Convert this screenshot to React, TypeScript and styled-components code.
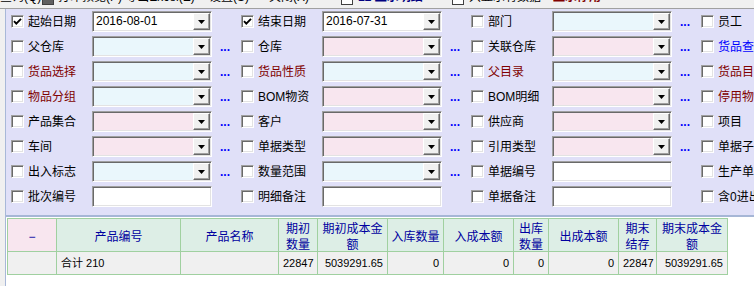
import React from 'react';
import styled, { createGlobalStyle } from 'styled-components';

const GlobalStyle = createGlobalStyle`
  html, body { margin: 0; padding: 0; }
  body {
    background: #f0f0f0;
    font-family: "Liberation Sans", "Noto Sans CJK SC", sans-serif;
    font-size: 12px;
    color: #000;
    width: 754px;
    height: 286px;
    overflow: hidden;
  }
  #root { width: 754px; height: 286px; }
`;

const CYAN = '#eaf7fc';
const PINK = '#f8e6ef';
const WHITE = '#ffffff';
const RED = '#800000';
const BLUE = '#0000ff';
const GRID = '#a0d0a0';

const Page = styled.div`
  width: 754px;
  height: 286px;
  display: flex;
  flex-direction: column;
  overflow: hidden;
`;

const ToolStrip = styled.div`
  flex: none;
  height: 8px;
  display: flex;
  align-items: flex-end;
  overflow: hidden;
  border-bottom: 1px solid #a0a0a0;
`;

const ToolItem = styled.span<{ $w: number; $color?: string; $bold?: boolean }>`
  flex: none;
  width: ${(p) => p.$w}px;
  height: 16px;
  line-height: 16px;
  margin-bottom: 3px;
  white-space: nowrap;
  overflow: hidden;
  color: ${(p) => p.$color || '#000'};
  font-weight: ${(p) => (p.$bold ? 'bold' : 'normal')};
`;

const ToolBox = styled.span<{ $w: number; $fill: string }>`
  flex: none;
  width: ${(p) => p.$w}px;
  height: 16px;
  margin-bottom: 3px;
  display: flex;
  align-items: flex-end;
  & > i {
    display: block;
    width: 12px;
    height: 12px;
    box-sizing: border-box;
    border: 1px solid #404040;
    background: ${(p) => p.$fill};
  }
`;

const Body = styled.div`
  flex: 1;
  display: flex;
  min-height: 0;
`;

const Gutter = styled.div`
  flex: none;
  width: 5px;
  background: #f0f0f0;
  border-right: 1px solid #a8b8d8;
`;

const Main = styled.div`
  flex: 1;
  min-width: 0;
  display: flex;
  flex-direction: column;
  overflow: hidden;
`;

const Panel = styled.div`
  flex: none;
  background: #e0e0f8;
  padding: 0 0 6px 5px;
  border-bottom: 2px solid #a6b6d6;
  display: grid;
  grid-template-columns: repeat(4, 230px);
  grid-auto-rows: 25px;
  overflow: hidden;
`;

const Field = styled.div`
  display: flex;
  align-items: center;
  height: 25px;
  white-space: nowrap;
`;

const CheckBox = styled.span`
  flex: none;
  width: 13px;
  height: 13px;
  box-sizing: border-box;
  background: #fff;
  border: 1px solid;
  border-color: #a0a0a0 #ffffff #ffffff #a0a0a0;
  box-shadow: inset 1px 1px 0 #696969, inset -1px -1px 0 #e3e3e3;
  margin-right: 4px;
  display: flex;
  align-items: center;
  justify-content: center;
`;

const Label = styled.span<{ $color?: string }>`
  flex: none;
  width: 64px;
  line-height: 16px;
  color: ${(p) => p.$color || '#000'};
  white-space: nowrap;
`;

const Box = styled.div<{ $bg: string }>`
  flex: none;
  width: 120px;
  height: 21px;
  box-sizing: border-box;
  border: 1px solid;
  border-color: #a0a0a0 #ffffff #ffffff #a0a0a0;
  box-shadow: inset 1px 1px 0 #696969, inset -1px -1px 0 #e3e3e3;
  padding: 1px;
  background: ${(p) => p.$bg};
  display: flex;
`;

const BoxText = styled.span`
  flex: 1;
  min-width: 0;
  padding-left: 2px;
  line-height: 17px;
  white-space: nowrap;
  overflow: hidden;
`;

const DropButton = styled.span`
  flex: none;
  width: 17px;
  box-sizing: border-box;
  background: #f0f0f0;
  border: 1px solid;
  border-color: #ffffff #696969 #696969 #ffffff;
  box-shadow: inset -1px -1px 0 #a0a0a0;
  display: flex;
  align-items: center;
  justify-content: center;
  padding-top: 1px;
`;

const Dots = styled.span`
  flex: none;
  margin-left: 8px;
  color: ${BLUE};
  font-weight: bold;
  line-height: 16px;
`;

const TableArea = styled.div`
  flex: 1;
  background: #fff;
  padding: 1px 0 0 1px;
`;

const Grid = styled.div<{ $cols: number[] }>`
  display: grid;
  grid-template-columns: ${(p) => p.$cols.map((c) => `${c}px`).join(' ')};
  width: max-content;
  border-left: 1px solid ${GRID};
  border-top: 1px solid ${GRID};
`;

const HeadCell = styled.div<{ $pink?: boolean }>`
  height: 33px;
  box-sizing: border-box;
  border-right: 1px solid ${GRID};
  border-bottom: 1px solid ${GRID};
  background: ${(p) => (p.$pink ? PINK : '#ddeee6')};
  color: #0000a0;
  font-size: 12px;
  line-height: 16px;
  padding: 3px 3px 0;
  display: flex;
  align-items: center;
  justify-content: center;
  text-align: center;
  overflow: hidden;
`;

const DataCell = styled.div<{ $align: 'left' | 'right' }>`
  height: 23px;
  box-sizing: border-box;
  border-right: 1px solid ${GRID};
  border-bottom: 1px solid ${GRID};
  background: #f0f0f0;
  font-size: 11px;
  line-height: 22px;
  padding: 0 4px;
  text-align: ${(p) => p.$align};
  white-space: nowrap;
  overflow: hidden;
`;

const CheckMark = () => (
  <svg width="9" height="9" viewBox="0 0 9 9">
    <path d="M1 4.2 L3.3 6.6 L8 1.8" stroke="#000" strokeWidth="1.9" fill="none" />
  </svg>
);

const Arrow = () => (
  <svg width="7" height="4" viewBox="0 0 7 4">
    <polygon points="0,0 7,0 3.5,4" fill="#000" />
  </svg>
);

type Kind = 'date' | 'combo' | 'text' | 'none';
interface FieldDef {
  label: string;
  color?: string;
  kind: Kind;
  bg?: string;
  value?: string;
  dots?: boolean;
  checked?: boolean;
}

const rows: FieldDef[][] = [
  [
    { label: '起始日期', kind: 'date', bg: WHITE, value: '2016-08-01', checked: true },
    { label: '结束日期', kind: 'date', bg: WHITE, value: '2016-07-31', checked: true },
    { label: '部门', kind: 'combo', bg: CYAN, dots: true },
    { label: '员工', kind: 'none' },
  ],
  [
    { label: '父仓库', kind: 'combo', bg: CYAN, dots: true },
    { label: '仓库', kind: 'combo', bg: PINK, dots: true },
    { label: '关联仓库', kind: 'combo', bg: PINK, dots: true },
    { label: '货品查询', kind: 'none', color: BLUE },
  ],
  [
    { label: '货品选择', kind: 'combo', bg: CYAN, dots: true, color: RED },
    { label: '货品性质', kind: 'combo', bg: CYAN, dots: true, color: RED },
    { label: '父目录', kind: 'combo', bg: CYAN, dots: true, color: RED },
    { label: '货品目录', kind: 'none', color: RED },
  ],
  [
    { label: '物品分组', kind: 'combo', bg: CYAN, dots: true, color: RED },
    { label: 'BOM物资', kind: 'combo', bg: PINK, dots: true },
    { label: 'BOM明细', kind: 'combo', bg: PINK, dots: true },
    { label: '停用物品', kind: 'none', color: RED },
  ],
  [
    { label: '产品集合', kind: 'combo', bg: PINK, dots: true },
    { label: '客户', kind: 'combo', bg: PINK, dots: true },
    { label: '供应商', kind: 'combo', bg: PINK, dots: true },
    { label: '项目', kind: 'none' },
  ],
  [
    { label: '车间', kind: 'combo', bg: PINK, dots: true },
    { label: '单据类型', kind: 'combo', bg: PINK, dots: true },
    { label: '引用类型', kind: 'combo', bg: PINK, dots: true },
    { label: '单据子类', kind: 'none' },
  ],
  [
    { label: '出入标志', kind: 'combo', bg: CYAN, dots: true },
    { label: '数量范围', kind: 'combo', bg: CYAN, dots: true },
    { label: '单据编号', kind: 'text', bg: WHITE },
    { label: '生产单号', kind: 'none' },
  ],
  [
    { label: '批次编号', kind: 'text', bg: WHITE },
    { label: '明细备注', kind: 'text', bg: WHITE },
    { label: '单据备注', kind: 'text', bg: WHITE },
    { label: '含0进出', kind: 'none' },
  ],
];

const colWidths = [49, 124, 98, 39, 70, 56, 70, 35, 70, 38, 71];
const headers = ['−', '产品编号', '产品名称', '期初数量', '期初成本金额', '入库数量', '入成本额', '出库数量', '出成本额', '期末结存', '期末成本金额'];
const totals: { text: string; align: 'left' | 'right' }[] = [
  { text: '', align: 'left' },
  { text: '合计 210', align: 'left' },
  { text: '', align: 'left' },
  { text: '22847', align: 'right' },
  { text: '5039291.65', align: 'right' },
  { text: '0', align: 'right' },
  { text: '0', align: 'right' },
  { text: '0', align: 'right' },
  { text: '0', align: 'right' },
  { text: '22847', align: 'right' },
  { text: '5039291.65', align: 'right' },
];

const FilterField = ({ f }: { f: FieldDef }) => (
  <Field>
    <CheckBox>{f.checked && <CheckMark />}</CheckBox>
    <Label $color={f.color}>{f.label}</Label>
    {f.kind !== 'none' && (
      <Box $bg={f.bg || WHITE}>
        <BoxText>{f.value || ''}</BoxText>
        {(f.kind === 'date' || f.kind === 'combo') && (
          <DropButton>
            <Arrow />
          </DropButton>
        )}
      </Box>
    )}
    {f.dots && <Dots>...</Dots>}
  </Field>
);

export default function App() {
  return (
    <>
      <GlobalStyle />
      <Page>
        <ToolStrip>
          <ToolItem $w={42}>查询(Q)</ToolItem>
          <ToolBox $w={16} $fill="#606060">
            <i />
          </ToolBox>
          <ToolItem $w={151}>打印预览(P)  导出Excel(E)</ToolItem>
          <ToolItem $w={60}>设置(S)</ToolItem>
          <ToolItem $w={72}>关闭(X)</ToolItem>
          <ToolBox $w={17} $fill="#ffffff">
            <i />
          </ToolBox>
          <ToolItem $w={94} $color="#000080" $bold>
            12 显示明细
          </ToolItem>
          <ToolBox $w={17} $fill="#ffffff">
            <i />
          </ToolBox>
          <ToolItem $w={84}>只显示有数据</ToolItem>
          <ToolItem $w={60} $color={RED} $bold>
            显示停用
          </ToolItem>
        </ToolStrip>
        <Body>
          <Gutter />
          <Main>
            <Panel>
              {rows.map((r, i) => r.map((f, j) => <FilterField key={`${i}-${j}`} f={f} />))}
            </Panel>
            <TableArea>
              <Grid $cols={colWidths}>
                {headers.map((h, i) => (
                  <HeadCell key={h} $pink={i === 0}>
                    <span>{h}</span>
                  </HeadCell>
                ))}
                {totals.map((c, i) => (
                  <DataCell key={i} $align={c.align}>
                    {c.text}
                  </DataCell>
                ))}
              </Grid>
            </TableArea>
          </Main>
        </Body>
      </Page>
    </>
  );
}
